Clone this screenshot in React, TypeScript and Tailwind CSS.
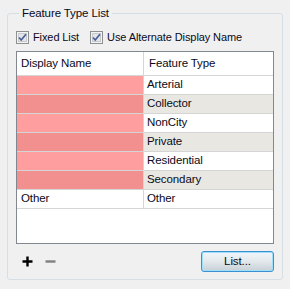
import React from 'react';

const rows = [
  { name: '', type: 'Arterial', pink: 'bg-[#ff9e9e]', alt: false },
  { name: '', type: 'Collector', pink: 'bg-[#f28f8f]', alt: true },
  { name: '', type: 'NonCity', pink: 'bg-[#ff9e9e]', alt: false },
  { name: '', type: 'Private', pink: 'bg-[#f28f8f]', alt: true },
  { name: '', type: 'Residential', pink: 'bg-[#ff9e9e]', alt: false },
  { name: '', type: 'Secondary', pink: 'bg-[#f28f8f]', alt: true },
  { name: 'Other', type: 'Other', pink: 'bg-white', alt: false },
];

const CheckBox = () => (
  <svg width="13" height="13" viewBox="0 0 13 13">
    <rect x="0.5" y="0.5" width="12" height="12" fill="#f4f4f4" stroke="#8e8f8f" />
    <rect x="2.5" y="2.5" width="8" height="8" fill="#e3e5e8" stroke="#c6c9cd" />
    <path d="M3 6.5 L5.2 9 L10 3.2" fill="none" stroke="#4a5f97" strokeWidth="1.7" />
  </svg>
);

const App: React.FC = () => {
  return (
    <div className="w-[290px] h-[289px] bg-[#f0f0f0] pl-[7px] pt-[6px] font-['Liberation_Sans',Arial,sans-serif] text-[11px] tracking-[-0.1px] text-[#0a0a1a]">
      <fieldset className="w-[276px] h-[274px] border border-[#d5dfe5] rounded-[3px] px-[8px] pt-[11px]">
        <legend className="ml-[3px] px-[3px] leading-[14px] text-[11.5px]">Feature Type List</legend>

        <div className="flex items-center h-[13px]">
          <CheckBox />
          <span className="ml-[4px]">Fixed List</span>
          <div className="ml-[11px] flex items-center">
            <CheckBox />
            <span className="ml-[4px]">Use Alternate Display Name</span>
          </div>
        </div>

        <div className="mt-[7px] w-[258px] h-[193px] border border-[#828790] bg-white text-[11.5px]">
          <div className="flex h-[24px] border-b border-[#d5d5d5]">
            <div className="w-[127px] border-r border-[#d5d5d5] pl-[4px] flex items-center">Display Name</div>
            <div className="flex-1 pl-[5px] flex items-center">Feature Type</div>
          </div>
          {rows.map((r) => (
            <div key={r.type} className="flex h-[19px] border-b border-[#d5d5d5]">
              <div className={`w-[127px] border-r border-[#d5d5d5] pl-[4px] flex items-center ${r.pink}`}>{r.name}</div>
              <div className={`flex-1 pl-[3px] flex items-center ${r.alt ? 'bg-[#e8e7e1]' : 'bg-white'}`}>{r.type}</div>
            </div>
          ))}
        </div>

        <div className="mt-[7px] flex items-center justify-between">
          <div className="flex items-center pl-[6px] gap-[12px]">
            <svg width="11" height="11" viewBox="0 0 11 11">
              <path d="M5.5 0.5 V10.5 M0.5 5.5 H10.5" stroke="#000" strokeWidth="2.4" />
            </svg>
            <svg width="11" height="11" viewBox="0 0 11 11">
              <path d="M0.5 5.5 H10.5" stroke="#808080" strokeWidth="2.4" />
            </svg>
          </div>
          <button className="w-[73px] h-[21px] rounded-[3px] border border-[#3c8fd0] bg-gradient-to-b from-[#f0f6fa] via-[#e2e8ec] to-[#c8d0d6] shadow-[inset_0_0_0_1px_#9ee0f8] text-[11.5px] flex items-center justify-center">
            List...
          </button>
        </div>
      </fieldset>
    </div>
  );
};

export default App;
